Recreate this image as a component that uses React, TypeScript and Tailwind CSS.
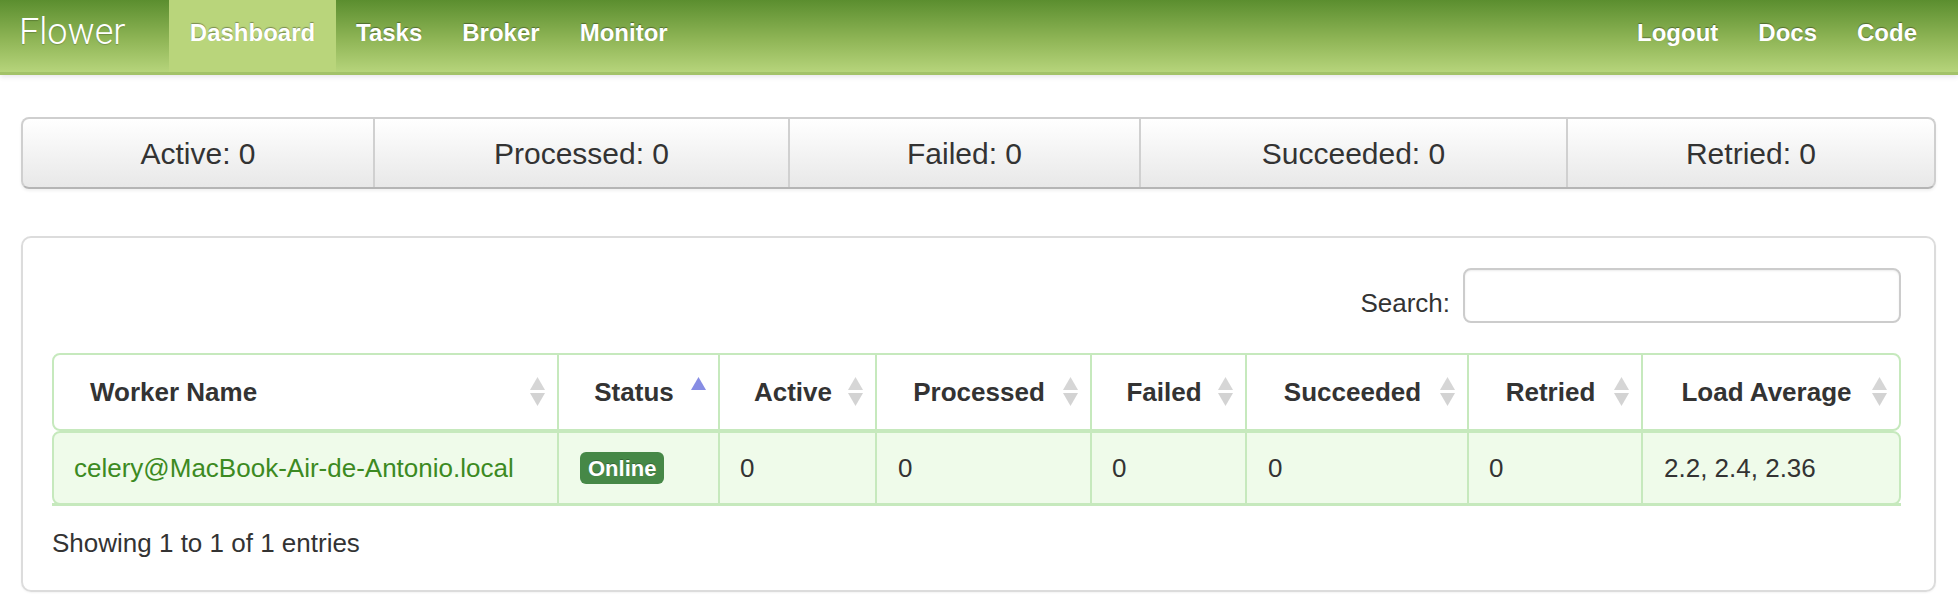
import React from 'react';

function SortIcon({ active }: { active?: boolean }) {
  return (
    <svg width="15" height="30" viewBox="0 0 15 30" className="shrink-0">
      <polygon points="7.5,0 15,13 0,13" fill={active ? '#878de4' : '#d6d6d6'} />
      {!active && <polygon points="0,16 15,16 7.5,29" fill="#d3d3d3" />}
    </svg>
  );
}

const headers = ['Status', 'Active', 'Processed', 'Failed', 'Succeeded', 'Retried', 'Load Average'];

export default function App() {
  return (
    <div className="min-h-[614px] bg-white font-['Liberation_Sans',Arial,sans-serif] text-[#333]">
      <nav className="flex h-[75px] border-b-[3px] border-[#a3c269] bg-[linear-gradient(to_bottom,#5b8e2f,#8fb556_55%,#b6d47b)] shadow-[0_2px_5px_rgba(60,40,90,0.12)] text-white">
        <div className="flex h-full w-[169px] items-center pb-[9px] pl-[19px]">
          <span className="font-['Roboto',sans-serif] text-[36px] font-light leading-[42px] [text-shadow:0_1px_1px_rgba(0,0,0,0.2)]">Flower</span>
        </div>
        <div className="flex h-full text-[24px] font-bold leading-[28px] [text-shadow:0_-1px_1px_rgba(0,0,0,0.35)]">
          <a className="flex h-full w-[167px] items-center justify-center bg-[#b9d57b] pb-[6px]">Dashboard</a>
          <a className="flex h-full items-center px-[20px] pb-[6px]">Tasks</a>
          <a className="flex h-full items-center px-[20px] pb-[6px]">Broker</a>
          <a className="flex h-full items-center px-[20px] pb-[6px]">Monitor</a>
        </div>
        <div className="ml-auto flex h-full pr-[21px] text-[24px] font-bold leading-[28px] [text-shadow:0_-1px_1px_rgba(0,0,0,0.35)]">
          <a className="flex h-full items-center px-[20px] pb-[6px]">Logout</a>
          <a className="flex h-full items-center px-[20px] pb-[6px]">Docs</a>
          <a className="flex h-full items-center px-[20px] pb-[6px]">Code</a>
        </div>
      </nav>

      <div className="ml-[21px] mr-[22px]">
        <div className="mt-[42px] grid h-[72px] grid-cols-[350px_415px_351px_427px_1fr] overflow-hidden rounded-[8px] border-2 border-[#cfcfcf] border-b-[#b5b5b5] bg-[linear-gradient(to_bottom,#ffffff,#e8e8e8)] text-[30px] shadow-[0_2px_3px_rgba(0,0,0,0.06)]">
          <div className="flex items-center justify-center">Active: 0</div>
          <div className="flex items-center justify-center border-l-2 border-[#d0d0d0]">Processed: 0</div>
          <div className="flex items-center justify-center border-l-2 border-[#d0d0d0]">Failed: 0</div>
          <div className="flex items-center justify-center border-l-2 border-[#d0d0d0]">Succeeded: 0</div>
          <div className="flex items-center justify-center border-l-2 border-[#d0d0d0]">Retried: 0</div>
        </div>

        <div className="mt-[47px] rounded-[10px] border-2 border-[#dcdcdc] pb-[32px] pl-[29px] pr-[33px] pt-[30px] text-[26px] shadow-[0_1px_2px_rgba(0,0,0,0.05)]">
          <div className="flex items-center justify-end gap-[13px]">
            <span className="mt-[15px] leading-[30px]">Search:</span>
            <div className="h-[55px] w-[438px] rounded-[8px] border-2 border-[#cccccc] bg-white shadow-[inset_0_1px_2px_rgba(0,0,0,0.08)]" />
          </div>

          <div className="mt-[30px]">
            <div className="grid h-[78px] grid-cols-[503px_161px_157px_215px_155px_222px_174px_1fr] rounded-[8px] border-2 border-[#c6e9bd] bg-white font-bold">
              <div className="flex items-center pl-[36px] pr-[12px]">
                <span className="flex-1">Worker Name</span>
                <SortIcon />
              </div>
              {headers.map((h) => (
                <div key={h} className="flex items-center border-l-2 border-[#c6e9bd] pl-[18px] pr-[12px]">
                  <span className="flex-1 text-center">{h}</span>
                  <SortIcon active={h === 'Status'} />
                </div>
              ))}
            </div>
            <div className="grid h-[74px] grid-cols-[503px_161px_157px_215px_155px_222px_174px_1fr] rounded-[8px] border-2 border-[#c6e9bd] bg-[#effbea]">
              <div className="flex items-center pl-[20px] text-[#3c8a22]">celery@MacBook-Air-de-Antonio.local</div>
              <div className="flex items-center border-l-2 border-[#c6e9bd] pl-[21px]">
                <span className="flex h-[32px] items-center rounded-[6px] bg-[#468847] px-[8px] text-[22px] font-bold text-white [text-shadow:0_-1px_0_rgba(0,0,0,0.25)]">Online</span>
              </div>
              <div className="flex items-center border-l-2 border-[#c6e9bd] pl-[20px]">0</div>
              <div className="flex items-center border-l-2 border-[#c6e9bd] pl-[21px]">0</div>
              <div className="flex items-center border-l-2 border-[#c6e9bd] pl-[20px]">0</div>
              <div className="flex items-center border-l-2 border-[#c6e9bd] pl-[21px]">0</div>
              <div className="flex items-center border-l-2 border-[#c6e9bd] pl-[20px]">0</div>
              <div className="flex items-center border-l-2 border-[#c6e9bd] pl-[21px]">2.2, 2.4, 2.36</div>
            </div>
            <div className="-mt-[2px] h-[3px] bg-[#c6e9bd]" />
          </div>

          <div className="mt-[22px] leading-[30px]">Showing 1 to 1 of 1 entries</div>
        </div>
      </div>
    </div>
  );
}
